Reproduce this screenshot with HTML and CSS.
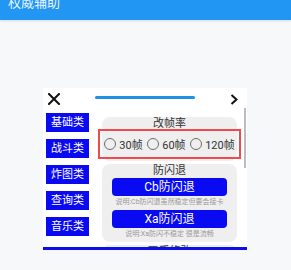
FILE: index.html
```html
<!DOCTYPE html>
<html lang="zh">
<head>
<meta charset="utf-8">
<link rel="stylesheet" href="styles.css">
</head>
<body>
<header class="appbar"><span class="apptitle">权威辅助</span></header>
<main class="stage">
  <section class="dialog">
    <div class="dlg-top">
      <svg class="close" width="12" height="12" viewBox="0 0 12 12"><path d="M1 1L11 11M11 1L1 11" stroke="#111" stroke-width="2" stroke-linecap="square"/></svg>
      <div class="progress"></div>
      <svg class="next" width="8" height="11" viewBox="0 0 8 11"><path d="M1.5 1L6.5 5.5L1.5 10" fill="none" stroke="#111" stroke-width="2"/></svg>
    </div>
    <div class="dlg-body">
      <nav class="cats">
        <div class="cat">基础类</div>
        <div class="cat">战斗类</div>
        <div class="cat">炸图类</div>
        <div class="cat">查询类</div>
        <div class="cat">音乐类</div>
      </nav>
      <div class="panel">
        <div class="card">
          <div class="card-title">改帧率</div>
          <div class="radios">
            <label class="radio"><span class="dot"></span>30帧</label>
            <label class="radio"><span class="dot"></span>60帧</label>
            <label class="radio"><span class="dot"></span>120帧</label>
          </div>
        </div>
        <div class="card">
          <div class="card-title">防闪退</div>
          <div class="action">Cb防闪退</div>
          <div class="note">说明:Cb防闪退虽然稳定但要会接卡</div>
          <div class="action">Xa防闪退</div>
          <div class="note">说明:Xa防闪不稳定 很是流畅</div>
        </div>
        <div class="card">
          <div class="card-title">画质修改</div>
        </div>
      </div>
      <div class="scrollbar"></div>
    </div>
    <div class="dlg-bar"></div>
  </section>
</main>
</body>
</html>
```
FILE: styles.css
```css
* { box-sizing: border-box; }
html, body { margin: 0; padding: 0; }
body {
  width: 291px;
  height: 270px;
  overflow: hidden;
  background: #f7f8fa;
  font-family: Roboto, "Noto Sans CJK SC", sans-serif;
  color: #333;
}
.appbar {
  height: 20px;
  background: #2196f3;
  display: flex;
  align-items: flex-end;
  padding: 0 0 11px 8px;
  overflow: hidden;
  box-shadow: 0 1px 2px rgba(0,0,0,0.12);
}
.apptitle {
  color: #fff;
  font-size: 13px;
  line-height: 13px;
  opacity: 0.92;
}
.stage {
  padding: 68px 0 0 43px;
}
.dialog {
  width: 204px;
  background: #fff;
  display: flex;
  flex-direction: column;
}
.dlg-top {
  height: 20px;
  display: flex;
  align-items: center;
  padding: 2px 9px 0 5px;
}
.close { display: block; }
.progress {
  margin-left: 35px;
  width: 100px;
  height: 3px;
  border-radius: 2px;
  background: #1f92e6;
  align-self: flex-start;
  margin-top: 6px;
}
.next { margin-left: auto; display: block; }
.dlg-body {
  height: 139px;
  display: flex;
  overflow: hidden;
}
.cats {
  padding: 5px 0 0 3px;
  display: flex;
  flex-direction: column;
  gap: 7px;
}
.cat {
  width: 43px;
  height: 19px;
  background: #0a0af2;
  color: #fff;
  font-size: 11px;
  line-height: 19px;
  text-align: center;
}
.panel {
  margin-left: 9px;
  width: 143px;
  padding-top: 9px;
  display: flex;
  flex-direction: column;
  gap: 3px;
}
.card {
  margin: 0 4px;
  background: #efefef;
  border-radius: 8px;
  padding: 1px 0 2px;
  flex: none;
}
.card-title {
  text-align: center;
  font-size: 11px;
  line-height: 11px;
  color: #333;
}
.radios {
  margin: 0 -4px;
  height: 30px;
  border: 2px solid #ee4a4f;
  display: flex;
  align-items: center;
  justify-content: space-around;
  padding: 0 2px;
}
.radio {
  display: flex;
  align-items: center;
  gap: 3px;
  font-size: 11px;
  color: #333;
}
.dot {
  width: 12px;
  height: 12px;
  border: 1.5px solid #6e6e6e;
  border-radius: 50%;
}
.action {
  margin: 2px auto 0;
  width: 115px;
  height: 18px;
  background: #0a0af2;
  border-radius: 4px;
  color: #fff;
  font-size: 12px;
  line-height: 18px;
  text-align: center;
}
.note {
  height: 12px;
  font-size: 7px;
  line-height: 12px;
  text-align: center;
  color: #9a9a9a;
}
.scrollbar {
  margin-left: 3px;
  width: 2px;
  height: 60px;
  background: #bdbdbd;
  flex: none;
}
.dlg-bar {
  height: 3px;
  background: #0d0df0;
}
```
